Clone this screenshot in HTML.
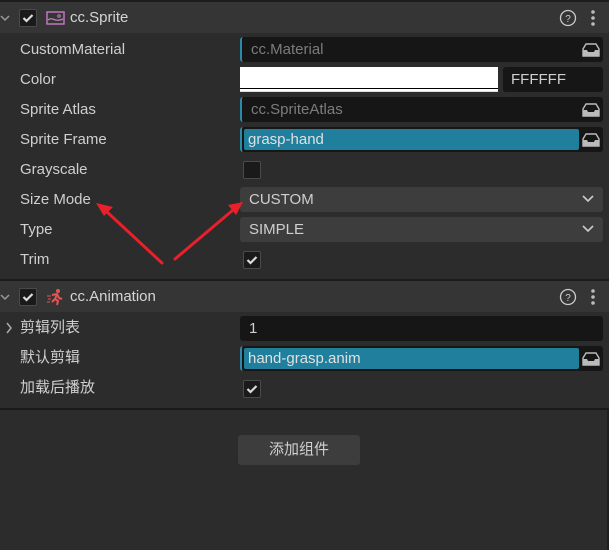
<!DOCTYPE html>
<html><head><meta charset="utf-8"><style>
*{box-sizing:border-box;margin:0;padding:0}
body{width:609px;height:550px;background:#2c2c2c;position:relative;overflow:hidden;font-family:"Liberation Sans","Noto Sans CJK SC",sans-serif;font-size:15px;color:#cfcfcf}
.a{position:absolute}
.hdr{position:absolute;left:0;width:609px;height:31px;background:#353535}
.lbl{position:absolute;left:20px;height:20px;line-height:20px}
.fld{position:absolute;left:240px;width:363px;height:25px;background:#161616;border-radius:3px;line-height:25px;padding-left:9px;color:#7c7c7c}
.asset{border-left:2px solid #2a8aa8}
.sel{background:#3d3d3d;color:#cfcfcf;padding-left:9px}
.cb{position:absolute;width:18px;height:18px;background:#1a1a1a;border:1px solid #4a4a4a;border-radius:2px}
.tl{position:absolute;left:244px;width:335px;height:21px;background:#1f7f9c;border-radius:2px;color:#e0e0e0;line-height:21px;padding-left:4px}
</style></head><body>
<div class="a" style="left:0;top:0;width:609px;height:2px;background:#1c1c1c"></div>
<div class="hdr" style="top:2px"></div>
<svg class="a" style="left:0;top:13px" width="12" height="10"><path d="M1 3l4 4 4-4" stroke="#999" stroke-width="1.5" fill="none"/></svg>
<div class="cb" style="left:19px;top:9px"><svg width="16" height="16"><path d="M3.5 8l3 3 6-6" stroke="#ddd" stroke-width="2.2" fill="none"/></svg></div>
<svg class="a" style="left:46px;top:11px" width="19" height="14"><rect x="1" y="1" width="17" height="12" fill="none" stroke="#c87ac8" stroke-width="1.4"/><path d="M2 9c4-4 7 3 15-1" stroke="#c87ac8" stroke-width="1.3" fill="none"/><circle cx="13" cy="5" r="1.3" fill="none" stroke="#c87ac8"/></svg>
<div class="a" style="left:70px;top:9px;font-size:15px;color:#d5d5d5">cc.Sprite</div>
<svg class="a" style="left:559px;top:9px" width="18" height="18"><circle cx="9" cy="9" r="7.5" fill="none" stroke="#ccc" stroke-width="1.3"/><text x="9" y="13" font-size="10" text-anchor="middle" fill="#ccc" font-family="Liberation Sans">?</text></svg>
<svg class="a" style="left:590px;top:9px" width="6" height="18"><circle cx="3" cy="3" r="1.8" fill="#bbb"/><circle cx="3" cy="9" r="1.8" fill="#bbb"/><circle cx="3" cy="15" r="1.8" fill="#bbb"/></svg>

<div class="lbl" style="top:40px">CustomMaterial</div>
<div class="fld asset" style="top:37px">cc.Material</div>
<div class="lbl" style="top:70px">Color</div>
<div class="a" style="left:240px;top:67px;width:258px;height:25px;background:#fff;border-bottom:1px solid #ddd"><div style="position:absolute;left:0;right:0;top:21px;height:1px;background:#000"></div></div>
<div class="fld" style="top:67px;left:503px;width:100px;color:#cfcfcf;padding-left:8px">FFFFFF</div>
<div class="lbl" style="top:100px">Sprite Atlas</div>
<div class="fld asset" style="top:97px">cc.SpriteAtlas</div>
<div class="lbl" style="top:130px">Sprite Frame</div>
<div class="fld asset" style="top:127px"></div>
<div class="tl" style="top:129px">grasp-hand</div>
<div class="lbl" style="top:160px">Grayscale</div>
<div class="cb" style="left:243px;top:161px"></div>
<div class="lbl" style="top:190px">Size Mode</div>
<div class="fld sel" style="top:187px">CUSTOM</div>
<div class="lbl" style="top:220px">Type</div>
<div class="fld sel" style="top:217px">SIMPLE</div>
<div class="lbl" style="top:250px">Trim</div>
<div class="cb" style="left:243px;top:251px"><svg width="16" height="16"><path d="M3.5 8l3 3 6-6" stroke="#ddd" stroke-width="2.2" fill="none"/></svg></div>

<div class="a" style="left:0;top:279px;width:609px;height:2px;background:#1c1c1c"></div>
<div class="hdr" style="top:281px"></div>
<svg class="a" style="left:0;top:292px" width="12" height="10"><path d="M1 3l4 4 4-4" stroke="#999" stroke-width="1.5" fill="none"/></svg>
<div class="cb" style="left:19px;top:288px"><svg width="16" height="16"><path d="M3.5 8l3 3 6-6" stroke="#ddd" stroke-width="2.2" fill="none"/></svg></div>
<svg class="a" style="left:46px;top:288px" width="18" height="18"><circle cx="12" cy="3" r="2" fill="#e05555"/><path d="M6 7l5-1 2 4 3 1M11 6l-2 5 3 2-1 4M9 11l-3 3" stroke="#e05555" stroke-width="2" fill="none"/><path d="M1 8h4M2 11h3M1 14h3" stroke="#e05555" stroke-width="1"/></svg>
<div class="a" style="left:70px;top:288px;font-size:15px;color:#d5d5d5">cc.Animation</div>
<svg class="a" style="left:559px;top:288px" width="18" height="18"><circle cx="9" cy="9" r="7.5" fill="none" stroke="#ccc" stroke-width="1.3"/><text x="9" y="13" font-size="10" text-anchor="middle" fill="#ccc" font-family="Liberation Sans">?</text></svg>
<svg class="a" style="left:590px;top:288px" width="6" height="18"><circle cx="3" cy="3" r="1.8" fill="#bbb"/><circle cx="3" cy="9" r="1.8" fill="#bbb"/><circle cx="3" cy="15" r="1.8" fill="#bbb"/></svg>

<svg class="a" style="left:5px;top:322px" width="8" height="12"><path d="M2 1l4 5-4 5" stroke="#aaa" stroke-width="1.5" fill="none"/></svg>
<div class="lbl" style="top:318px">剪辑列表</div>
<div class="fld" style="top:316px;color:#cfcfcf">1</div>
<div class="lbl" style="top:348px">默认剪辑</div>
<div class="fld asset" style="top:346px"></div>
<div class="tl" style="top:348px">hand-grasp.anim</div>
<div class="lbl" style="top:378px">加载后播放</div>
<div class="cb" style="left:243px;top:380px"><svg width="16" height="16"><path d="M3.5 8l3 3 6-6" stroke="#ddd" stroke-width="2.2" fill="none"/></svg></div>
<div class="a" style="left:0;top:408px;width:609px;height:2px;background:#1a1a1a"></div>
<div class="a" style="left:607px;top:410px;width:2px;height:140px;background:#1f1f1f"></div>
<div class="a" style="left:238px;top:435px;width:122px;height:30px;background:#3d3d3d;border-radius:3px;text-align:center;line-height:30px;color:#d0d0d0">添加组件</div>

<svg class="a" style="left:0;top:0" width="609" height="550">
<g id="tray"><path d="M586 44h10l3 5v7h-16v-7z" fill="none" stroke="#bbb" stroke-width="1.4"/><path d="M583 50h4l1 2h6l1-2h4v6h-16z" fill="#bbb"/></g>
<use href="#tray" y="60"/><use href="#tray" y="90"/><use href="#tray" y="309"/>
<path d="M583 196l5 5 5-5" stroke="#ccc" stroke-width="1.6" fill="none"/>
<path d="M583 226l5 5 5-5" stroke="#ccc" stroke-width="1.6" fill="none"/>
<g stroke="#e8202a" stroke-width="3" stroke-linecap="round">
<line x1="162" y1="263" x2="106" y2="211"/>
<line x1="175" y1="259" x2="233" y2="210"/>
</g>
<polygon points="96,203 113,207 104,216" fill="#e8202a"/>
<polygon points="243,202 228,205 236,215" fill="#e8202a"/>
</svg>
</body></html>
